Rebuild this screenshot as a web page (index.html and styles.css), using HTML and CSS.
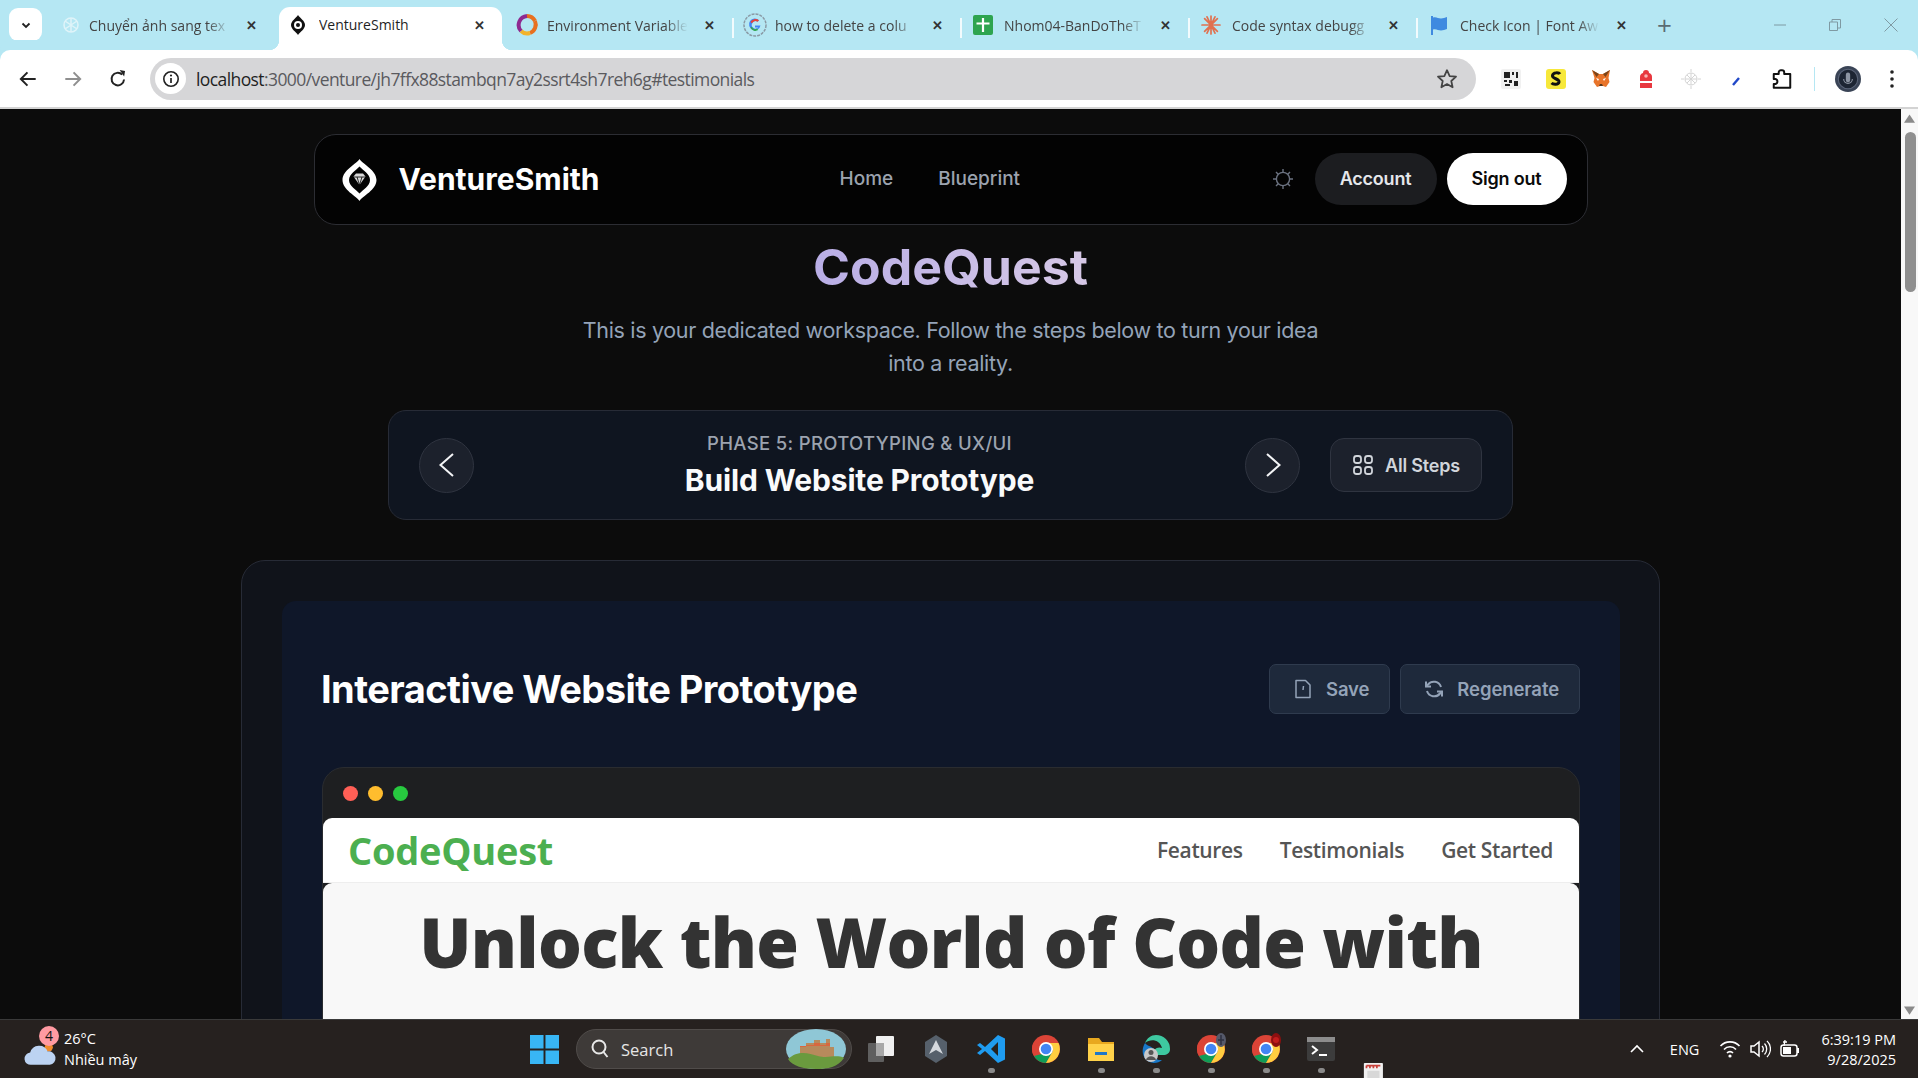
FILE: index.html
```html
<!DOCTYPE html>
<html lang="en">
<head>
<meta charset="utf-8">
<title>VentureSmith</title>
<link rel="stylesheet" href="styles.css">
</head>
<body>
<div class="window">
  <header class="tabstrip">
    <button class="tab-search"><svg width="12" height="12" viewBox="0 0 12 12"><path d="M2.5 4.5 6 8l3.5-3.5" fill="none" stroke="#222" stroke-width="1.8"/></svg></button>
    <div class="tab tab-first">
      <svg class="fav" viewBox="0 0 20 20"><g fill="none" stroke="#dff4f9" stroke-width="1.5"><circle cx="10" cy="10" r="7"/><path d="M10 3v14M4 6l12 8M16 6 4 14"/></g></svg>
      <span class="tab-title">Chuyển ảnh sang tex</span><span class="tab-x">✕</span>
    </div>
    <div class="tab tab-active">
      <svg class="fav" viewBox="0 0 20 20"><path d="M10 0C12 3 17 6 17 10S12 17 10 20C8 17 3 14 3 10S8 3 10 0Z" fill="#111"/><circle cx="10" cy="10" r="4" fill="#fff"/><circle cx="10" cy="10" r="2" fill="#111"/></svg>
      <span class="tab-title">VentureSmith</span><span class="tab-x">✕</span>
    </div>
    <div class="tab tab-after-active">
      <svg class="fav fav-lg" viewBox="0 0 24 24"><g fill="none" stroke-width="4"><path d="M12 3a9 9 0 0 1 8 5" stroke="#e8701f"/><path d="M20 8a9 9 0 0 1-5 12" stroke="#e8701f"/><path d="M15 20a9 9 0 0 1-9-2" stroke="#f2b32a"/><path d="M6 18A9 9 0 0 1 12 3" stroke="#8e2a90"/></g></svg>
      <span class="tab-title">Environment Variable</span><span class="tab-x">✕</span>
    </div>
    <div class="tab tab-sep">
      <svg class="fav fav-lg" viewBox="0 0 24 24"><circle cx="12" cy="12" r="11" fill="none" stroke="#8a9aa5" stroke-width="1.5" stroke-dasharray="3 1"/><path d="M17.500 12.400H12v2h3.300A3.700 3.700 0 1 1 14.500 8.800l1.500-1.500A5.800 5.800 0 1 0 17.500 12.400Z" fill="#4285f4"/><path d="M7.400 9a5.800 5.800 0 0 1 8.600-1.700l-1.500 1.500A3.700 3.700 0 0 0 9 10.200Z" fill="#ea4335"/><path d="M8.800 13.800a3.700 3.700 0 0 0 5 1.800l1.500 1.500a5.800 5.800 0 0 1-8-2.300Z" fill="#34a853"/></svg>
      <span class="tab-title">how to delete a colu</span><span class="tab-x">✕</span>
    </div>
    <div class="tab tab-sep">
      <svg class="fav" viewBox="0 0 20 20"><rect width="20" height="20" rx="2" fill="#2ea44f"/><path d="M10 3v14M3.500 8.500h13" stroke="#fff" stroke-width="2.200"/></svg>
      <span class="tab-title">Nhom04-BanDoTheT</span><span class="tab-x">✕</span>
    </div>
    <div class="tab tab-sep">
      <svg class="fav" viewBox="0 0 20 20"><g stroke="#e0714f" stroke-width="1.700" stroke-linecap="round"><path d="M10 1v18M1 10h18M3.600 3.600l12.800 12.800M16.400 3.600 3.600 16.400M6 1.800l8 16.400M14 1.800 6 18.200"/></g></svg>
      <span class="tab-title">Code syntax debugg</span><span class="tab-x">✕</span>
    </div>
    <div class="tab tab-sep tab-last">
      <svg class="fav" viewBox="0 0 20 20"><path d="M2 1h2v1.500c3.500-1 5 1 8 1 2 0 4-1 6-1.500v12c-2 .5-4 1.500-6 1.500-3 0-4.500-2-8-1V20H2Z" fill="#3f8ae0"/></svg>
      <span class="tab-title">Check Icon | Font Aw</span><span class="tab-x">✕</span>
    </div>
    <span class="tab-new">+</span>
    <div class="win-controls">
      <svg width="12" height="12" viewBox="0 0 12 12"><path d="M0 6h12" stroke="#7f9aa3"/></svg>
      <svg width="12" height="12" viewBox="0 0 12 12"><path d="M.5 3h8v8.500h-8ZM3 3V.5h8.500V9H8.500" fill="none" stroke="#7f9aa3"/></svg>
      <svg width="14" height="14" viewBox="0 0 14 14"><path d="M.5.500l13 13M13.500.500l-13 13" stroke="#7f9aa3"/></svg>
    </div>
  </header>

  <div class="toolbar">
    <svg class="tool" viewBox="0 0 20 20"><path d="M17 10H4M9.500 4 3.500 10l6 6" fill="none" stroke="#222" stroke-width="1.800"/></svg>
    <svg class="tool" viewBox="0 0 20 20"><path d="M3 10h13M10.500 4l6 6-6 6" fill="none" stroke="#8f8f8f" stroke-width="1.800"/></svg>
    <svg class="tool" viewBox="0 0 20 20"><path d="M15.500 10.500A5.700 5.700 0 1 1 13.800 6" fill="none" stroke="#222" stroke-width="1.800"/><path d="M11 2.500h5v5Z" fill="#222" transform="rotate(10 15 5)"/></svg>
    <div class="omnibox">
      <span class="site-info"><svg width="18" height="18" viewBox="0 0 18 18"><circle cx="9" cy="9" r="7.200" fill="none" stroke="#222" stroke-width="1.600"/><path d="M9 8v5" stroke="#222" stroke-width="1.700"/><circle cx="9" cy="5.500" r="1.100" fill="#222"/></svg></span>
      <span class="url"><span class="url-host">localhost</span>:3000/venture/jh7ffx88stambqn7ay2ssrt4sh7reh6g#testimonials</span>
      <svg class="star" viewBox="0 0 20 20"><path d="m10 2 2.400 5.300 5.800.6-4.300 3.900 1.200 5.700-5.100-2.900-5.100 2.900 1.200-5.700L1.800 7.900l5.800-.6Z" fill="none" stroke="#444" stroke-width="1.600" stroke-linejoin="round"/></svg>
    </div>
    <div class="extensions">
      <svg class="ext" viewBox="0 0 20 20"><rect width="20" height="20" rx="2" fill="#f1f1f1"/><path d="M3 3h6v6H3ZM11 3h2v3h-2ZM15 3h2v6h-2ZM3 11h3v2H3ZM8 11h3v3H8ZM13 12h4v5h-4ZM4 15h5v2H4Z" fill="#222"/></svg>
      <svg class="ext" viewBox="0 0 20 20"><rect width="20" height="20" rx="3" fill="#f7e83a"/><path d="M14 5c-1-1.500-7-2-7.500 1.500S13.500 9.500 13 13c-.5 3-6 2.500-7.500 1" fill="none" stroke="#111" stroke-width="3"/></svg>
      <svg class="ext" viewBox="0 0 20 20"><path d="M1 1l7 4h4l7-4-1.500 8 1 4-3.500 5-3-1h-3l-3 1-3.500-5 1-4Z" fill="#e8742a"/><path d="M8 17h4l-1-2H9Z" fill="#5a3a20"/><path d="M1 1l7 4-2.500 3ZM19 1l-7 4 2.500 3Z" fill="#7c4418"/><path d="M5 9l3 1-1 2ZM15 9l-3 1 1 2Z" fill="#fff"/></svg>
      <svg class="ext" viewBox="0 0 20 20"><path d="M7 4c0-2 1-3 3-3s3 1 3 3c2 .5 3 2 3 4v4H4V8c0-2 1-3.500 3-4Z" fill="#e8383f"/><circle cx="10" cy="7" r="1.800" fill="#f7b5b5"/><path d="M4 14h12v5H4Z" fill="#e8383f"/></svg>
      <svg class="ext" viewBox="0 0 20 20"><g fill="none" stroke="#d4d4d4" stroke-width="1"><circle cx="10" cy="10" r="6"/><path d="M10 4v12M4 10h12M6 6l8 8M14 6l-8 8M10 0v3M10 17v3M0 10h3M17 10h3"/></g></svg>
      <svg class="ext" viewBox="0 0 20 20"><path d="M7 16l6-7" stroke="#2048c8" stroke-width="2.400"/></svg>
      <svg class="ext ext-puzzle" viewBox="0 0 20 20"><path d="M2.500 5.500H7V4a2 2 0 0 1 2-2h1a2 2 0 0 1 2 2v1.500h5.500V18H2.500v-3.500H4a2.300 2.300 0 0 0 0-4.500H2.500Z" fill="none" stroke="#111" stroke-width="1.800" stroke-linejoin="round"/></svg>
      <span class="tool-sep"></span>
      <svg class="avatar" viewBox="0 0 24 24"><circle cx="12" cy="12" r="12" fill="#3a4456"/><circle cx="12" cy="12" r="9" fill="#1d2533" stroke="#5b6478"/><rect x="10" y="6" width="4" height="9" rx="2" fill="#8d95a3"/><path d="M8 12a4 4 0 0 0 8 0" fill="none" stroke="#8d95a3"/></svg>
      <svg class="kebab" viewBox="0 0 4 20"><circle cx="2" cy="3" r="1.800" fill="#222"/><circle cx="2" cy="10" r="1.800" fill="#222"/><circle cx="2" cy="17" r="1.800" fill="#222"/></svg>
    </div>
  </div>

  <div class="viewport">
    <main class="page">
      <nav class="nav">
        <a class="brand">
          <svg class="brand-mark" viewBox="0 0 34 42"><path d="M17 0C20 5 34 11 34 21S20 37 17 42C14 37 0 31 0 21S14 5 17 0Z" fill="#fff"/><path d="M17 7.500C20 11 27.500 15 27.500 21S20 31 17 34.500C14 31 6.500 27 6.500 21S14 11 17 7.500Z" fill="#030303"/><path d="M11 17.500 13.500 14.500h7L23 17.500 17 26Z" fill="#d8d8d8"/><path d="M11 18h12M14.500 18 17 26 19.500 18" stroke="#030303" stroke-width=".8" fill="none"/></svg>
          <span class="brand-name">VentureSmith</span>
        </a>
        <div class="nav-links"><a>Home</a><a>Blueprint</a></div>
        <div class="nav-actions">
          <svg class="sun" viewBox="0 0 20 20"><g fill="none" stroke="#6b7280" stroke-width="1.400"><circle cx="10" cy="10" r="6.600"/><path d="M10 0v3M10 17v3M0 10h3M17 10h3M3 3l2.200 2.200M14.800 14.800 17 17M17 3l-2.200 2.200M5.200 14.800 3 17"/></g></svg>
          <a class="pill pill-dark">Account</a>
          <a class="pill pill-light">Sign out</a>
        </div>
      </nav>

      <h1 class="venture-title">CodeQuest</h1>
      <p class="venture-sub">This is your dedicated workspace. Follow the steps below to turn your idea into a reality.</p>

      <section class="stepper">
        <button class="round-btn"><svg width="30" height="30" viewBox="0 0 30 30"><path d="M21 4 8.500 15 21 26" fill="none" stroke="#f3f4f6" stroke-width="2"/></svg></button>
        <div class="step-text">
          <div class="step-phase">PHASE 5: PROTOTYPING &amp; UX/UI</div>
          <div class="step-name">Build Website Prototype</div>
        </div>
        <button class="round-btn"><svg width="30" height="30" viewBox="0 0 30 30"><path d="M9 4 21.500 15 9 26" fill="none" stroke="#f3f4f6" stroke-width="2"/></svg></button>
        <button class="all-steps"><svg width="22" height="22" viewBox="0 0 22 22"><g fill="none" stroke="#d1d5db" stroke-width="1.800"><rect x="2" y="2" width="7" height="7" rx="2.500"/><rect x="13" y="2" width="7" height="7" rx="2.500"/><rect x="2" y="13" width="7" height="7" rx="2.500"/><rect x="13" y="13" width="7" height="7" rx="2.500"/></g></svg>All Steps</button>
      </section>

      <section class="panel">
        <div class="panel-inner">
          <div class="panel-head">
            <h2 class="panel-title">Interactive Website Prototype</h2>
            <div class="panel-actions">
              <button class="ghost-btn"><svg width="22" height="22" viewBox="0 0 22 22"><path d="M4 2.500h9.500L18 7v12.500H4ZM11.500 8 11 12" fill="none" stroke="#94a3b8" stroke-width="1.500" stroke-linejoin="round"/></svg>Save</button>
              <button class="ghost-btn"><svg width="22" height="22" viewBox="0 0 22 22"><g fill="none" stroke="#94a3b8" stroke-width="2"><path d="M18 9a7.500 7.500 0 0 0-13-2.500L3 8.500"/><path d="M3 3.500v5h5"/><path d="M4 13a7.500 7.500 0 0 0 13 2.500l2-2"/><path d="M19 18.500v-5h-5"/></g></svg>Regenerate</button>
            </div>
          </div>
          <div class="mock">
            <div class="mock-bar"><span class="dot dot-red"></span><span class="dot dot-yellow"></span><span class="dot dot-green"></span></div>
            <div class="mock-nav">
              <span class="mock-logo">CodeQuest</span>
              <div class="mock-links"><a>Features</a><a>Testimonials</a><a>Get Started</a></div>
            </div>
            <div class="mock-hero"><h1 class="mock-heading">Unlock the World of Code with</h1></div>
          </div>
        </div>
      </section>
    </main>
    <aside class="scrollbar">
      <svg class="scroll-arrow" viewBox="0 0 12 9"><path d="M6 0 12 9H0Z" fill="#8a8a8a"/></svg>
      <div class="scroll-track"><div class="scroll-thumb"></div></div>
      <svg class="scroll-arrow" viewBox="0 0 12 9"><path d="M6 9 0 0h12Z" fill="#8a8a8a"/></svg>
    </aside>
  </div>

  <footer class="taskbar">
    <div class="weather">
      <svg class="weather-icon" viewBox="0 0 32 26"><circle cx="24" cy="7" r="4" fill="#f08a2c"/><path d="M7 24a6 6 0 0 1-1-12 9 9 0 0 1 17-1 6.500 6.500 0 0 1 2 13Z" fill="#bcd3f2"/></svg>
      <span class="weather-badge">4</span>
      <div class="weather-text"><span>26°C</span><span>Nhiều mây</span></div>
    </div>
    <div class="task-center">
      <svg class="start" viewBox="0 0 30 30"><path d="M0 0h14v14H0ZM16 0h14v14H16ZM0 16h14v14H0ZM16 16h14v14H16Z" fill="#38b6f5"/></svg>
      <div class="search">
        <svg width="20" height="22" viewBox="0 0 20 22"><circle cx="9" cy="9" r="6.500" fill="none" stroke="#e8e8e8" stroke-width="2"/><path d="m13.500 14 4 5" stroke="#e8e8e8" stroke-width="2"/></svg>
        <span>Search</span>
        <svg class="search-art" viewBox="0 0 60 40"><ellipse cx="30" cy="20" rx="30" ry="20" fill="#8fc7d6"/><path d="M14 18h6v-4h8v-3h6v3h6v-4h4v8h4v10H14Z" fill="#b78a5c"/><path d="M14 18h6v-2h8v-2h6v2h6v-2h4v3H14Z" fill="#d9673f"/><path d="M2 30c10-9 20-6 30-3s18-2 26 2c-6 9-16 11-28 11S6 37 2 30Z" fill="#6a9a3e"/></svg>
      </div>
      <svg class="app" viewBox="0 0 30 30"><rect x="2" y="9" width="16" height="19" rx="1" fill="#5f5f5f"/><rect x="10" y="2" width="18" height="20" rx="1" fill="#f0f0f0"/><rect x="10" y="9" width="8" height="13" fill="#a8a8a8"/></svg>
      <svg class="app" viewBox="0 0 30 30"><path d="M15 1 26 8v14l-11 7L4 22V8Z" fill="#56606b"/><path d="M15 6 8 20l7-4 7 4Z" fill="#d4d8dd"/></svg>
      <span class="app-wrap app-on"><svg class="app" viewBox="0 0 30 30"><path d="M22 1l7 3.500v21L22 29 9 17l-5 4-3-2 5-4-5-4 3-2 5 4Z" fill="#1f9cf0"/><path d="M22 8v14l-7-7Z" fill="#262220"/></svg></span>
      <span class="app-wrap"><svg class="app" viewBox="0 0 30 30"><use href="#chrome"/></svg></span>
      <span class="app-wrap app-on"><svg class="app" viewBox="0 0 30 30"><path d="M2 4h11l3 4h12v4H2Z" fill="#e8a81f"/><path d="M2 10h26v17H2Z" fill="#ffd24a"/><rect x="9" y="18" width="12" height="3" fill="#1f78c8"/></svg></span>
      <span class="app-wrap app-on"><svg class="app" viewBox="0 0 30 30"><path d="M15 1a14 14 0 0 1 14 14c0 4-3 6-7 6H13c-2-6 4-9 8-7C19 6 10 4 4 9 6 4 10 1 15 1Z" fill="#3ec8a0"/><path d="M4 9c-5 8-2 19 9 20 3 0 6-1 8-3-7 1-11-5-8-11C10 12 6 12 4 9Z" fill="#1878c8"/><circle cx="10" cy="21" r="7" fill="#c8c8c8"/><circle cx="10" cy="18.500" r="2.500" fill="#555"/><path d="M5 26c1-5 9-5 10 0Z" fill="#555"/></svg></span>
      <span class="app-wrap app-on"><svg class="app app-over" viewBox="0 0 30 30"><use href="#chrome"/><ellipse cx="25" cy="6" rx="5" ry="7" fill="#55596a"/><path d="M25 1v10M22 6h6" stroke="#2e3140" stroke-width="1.500"/></svg></span>
      <span class="app-wrap app-on"><svg class="app app-over" viewBox="0 0 30 30"><use href="#chrome"/><ellipse cx="25" cy="6" rx="5" ry="7" fill="#8c1010"/><circle cx="25" cy="6" r="3" fill="#c21c1c"/></svg></span>
      <span class="app-wrap app-on"><svg class="app" viewBox="0 0 30 30"><rect x="1" y="3" width="28" height="24" rx="2" fill="#3c3c3c"/><rect x="1" y="3" width="28" height="5" fill="#8d8d8d"/><path d="m6 12 5 4-5 4" fill="none" stroke="#fff" stroke-width="2"/><path d="M13 21h8" stroke="#fff" stroke-width="2"/></svg></span>
      <svg class="floating-app" viewBox="0 0 30 30"><rect x="1" y="0" width="22" height="30" rx="1" fill="#f0f0f0"/><path d="M4 3h16M4 3v3M8 3v3M12 3v3M16 3v3" stroke="#c9403a" stroke-width="2"/><rect x="5" y="9" width="14" height="16" fill="#d8d8d8"/><path d="M24 28l4-6" stroke="#2d8ad8" stroke-width="2"/></svg>
    </div>
    <div class="tray">
      <svg width="16" height="10" viewBox="0 0 16 10"><path d="m2 8 6-6 6 6" fill="none" stroke="#fff" stroke-width="1.600"/></svg>
      <span class="tray-lang">ENG</span>
      <div class="tray-icons">
        <svg width="22" height="20" viewBox="0 0 22 20"><g fill="none" stroke="#fff" stroke-width="1.600"><path d="M1.500 7a13 13 0 0 1 19 0M5 10.500a8 8 0 0 1 12 0M8 14a4 4 0 0 1 6 0"/></g><circle cx="11" cy="17" r="1.600" fill="#fff"/></svg>
        <svg width="22" height="20" viewBox="0 0 22 20"><path d="M2 7h3l5-4v14l-5-4H2Z" fill="none" stroke="#fff" stroke-width="1.500"/><path d="M13 7a4 4 0 0 1 0 6M15.500 4.500a8 8 0 0 1 0 11M18 2a11 11 0 0 1 0 16" fill="none" stroke="#fff" stroke-width="1.300"/></svg>
        <svg width="22" height="20" viewBox="0 0 22 20"><rect x="2" y="6" width="16" height="11" rx="2.500" fill="none" stroke="#fff" stroke-width="1.500"/><rect x="18" y="9" width="2" height="5" fill="#fff"/><path d="M4 8h8v7H4Z" fill="#fff"/><path d="M6 1 5 7M8 3H4" stroke="#fff" stroke-width="1.300"/></svg>
      </div>
      <div class="clock"><span>6:39:19 PM</span><span>9/28/2025</span></div>
    </div>
  </footer>
</div>
<svg class="defs" width="0" height="0"><defs><g id="chrome"><circle cx="15" cy="15" r="14" fill="#db4437"/><path d="M15 15 3 22A14 14 0 0 1 3 8Z" fill="#db4437"/><path d="M3 22a14 14 0 0 0 12 7l7-12Z" fill="#0f9d58"/><path d="M15 9h12.500A14 14 0 0 1 15 29l7-12Z" fill="#ffcd40"/><circle cx="15" cy="15" r="7" fill="#fff"/><circle cx="15" cy="15" r="5.300" fill="#4285f4"/></g></defs></svg>
</body>
</html>
```

FILE: styles.css
```css
* { box-sizing: border-box; }
html, body { margin: 0; height: 100%; overflow: hidden; }
body { font-family: "Inter", "Liberation Sans", sans-serif; background: #0c0c0c; }
a { color: inherit; text-decoration: none; }
button { font-family: inherit; border: 0; padding: 0; background: none; }
h1, h2, p { margin: 0; }
.defs { position: absolute; }

.window { display: flex; flex-direction: column; height: 1078px; }

/* browser chrome */
.tabstrip { flex: none; height: 50px; background: #b5e7f3; display: flex; align-items: flex-end; padding-left: 9px; font: 14px "Open Sans", sans-serif; color: #444; position: relative; }
.tab-search { width: 33px; height: 33px; margin: 0 9px 9px 0; background: #fff; border-radius: 9px; display: flex; align-items: center; justify-content: center; }
.tab { flex: none; width: 228px; height: 42px; padding: 0 16px 8px 13px; display: flex; align-items: center; position: relative; }
.tab-first { padding: 0 21px 8px 10px; }
.tab-first .fav { margin-right: 8px; }
.tab-active { width: 223px; height: 43px; padding: 0 16px 8px 9px; background: #fff; border-radius: 11px 11px 0 0; color: #1f1f1f; z-index: 1; }
.tab-after-active { margin-left: 2px; }
.tab-active::before, .tab-active::after { content: ""; position: absolute; bottom: 0; width: 10px; height: 10px; }
.tab-active::before { left: -10px; background: radial-gradient(circle at 0 0, transparent 10px, #fff 10.500px); }
.tab-active::after { right: -10px; background: radial-gradient(circle at 100% 0, transparent 10px, #fff 10.500px); }
.tab-sep::before { content: ""; position: absolute; left: 0; top: 10px; height: 20px; width: 2px; background: #f2fbfd; }
.fav { width: 20px; height: 20px; flex: none; margin-right: 11px; }
.fav-lg { width: 24px; height: 24px; margin-right: 8px; margin-left: -2px; }
.tab-title { flex: 1; min-width: 0; white-space: nowrap; overflow: hidden; -webkit-mask-image: linear-gradient(90deg, #000 82%, transparent 97%); mask-image: linear-gradient(90deg, #000 82%, transparent 97%); }
.tab-active .tab-title { -webkit-mask-image: none; mask-image: none; }
.tab-x { flex: none; margin-left: 10px; width: 14px; font-size: 13px; font-weight: 700; color: #333; text-align: center; }
.tab-new { font-size: 26px; font-weight: 400; color: #5b6c73; margin: 0 0 13px 13px; line-height: 24px; }
.win-controls { position: absolute; right: 20px; top: 18px; display: flex; gap: 43px; align-items: center; }

.toolbar { flex: none; height: 59px; background: #fff; display: flex; align-items: center; padding: 0 0 0 17px; border-bottom: 2px solid #d3d3d3; border-top-left-radius: 10px; border-top-right-radius: 10px; box-shadow: 0 -10px 0 #b5e7f3; position: relative; }
.tool { width: 22px; height: 22px; margin-right: 23px; flex: none; }
.tool:nth-child(3) { margin-right: 21px; }
.omnibox { flex: none; width: 1326px; height: 42px; border-radius: 21px; background: #d6d6d8; display: flex; align-items: center; padding: 0 18px 0 5px; }
.site-info { width: 31px; height: 31px; border-radius: 50%; background: #fff; display: flex; align-items: center; justify-content: center; flex: none; }
.url { flex: 1; margin-left: 10px; font: 17.500px "Open Sans", sans-serif; letter-spacing: -.59px; color: #5a5a5e; }
.url-host { color: #1f1f1f; }
.star { width: 22px; height: 22px; }
.extensions { display: flex; align-items: center; flex: 1; padding-left: 25px; }
.ext { width: 20px; height: 20px; margin-right: 25px; flex: none; }
.ext-puzzle { width: 22px; height: 22px; margin-right: 21px; }
.tool-sep { width: 1px; height: 24px; background: #b5e7f3; margin-right: 20px; }
.avatar { width: 26px; height: 26px; margin-right: 29px; }
.kebab { width: 4px; height: 20px; }

/* page viewport */
.viewport { flex: 1; min-height: 0; display: flex; overflow: hidden; background: #0c0c0c; }
.page { flex: 1; min-width: 0; padding-top: 25px; display: flex; flex-direction: column; align-items: center; overflow: hidden; }
.scrollbar { flex: none; width: 17px; background: #f8f8f8; display: flex; flex-direction: column; }
.scroll-arrow { flex: none; width: 17px; height: 18px; padding: 5px 3px 4px; }
.scroll-track { flex: 1; }
.scroll-thumb { width: 11px; margin: 5px auto 0 4px; height: 160px; border-radius: 6px; background: #8f8f8f; }

/* site nav */
.nav { flex: none; width: 1274px; height: 91px; background: #030303; border: 1px solid #2c2d33; border-radius: 22px; display: flex; align-items: center; position: relative; padding: 0 20px 2px 27px; }
.brand { display: flex; align-items: center; gap: 22px; margin-top: 2px; }
.brand-mark { width: 35px; height: 42px; flex: none; }
.brand-name { font-size: 30px; font-weight: 700; color: #fff; margin-top: -2px; }
.nav-links { display: flex; gap: 45px; margin-left: 240px; font-size: 19px; font-weight: 500; color: #9ca3af; }
.nav-actions { margin-left: auto; display: flex; align-items: center; gap: 10px; }
.sun { width: 20px; height: 20px; margin-right: 12px; }
.pill { height: 52px; border-radius: 26px; display: flex; align-items: center; justify-content: center; font-size: 18px; font-weight: 600; letter-spacing: -.2px; }
.pill-dark { width: 122px; background: #1c1d20; color: #e5e7eb; }
.pill-light { width: 120px; background: #fff; color: #0a0a0a; }

.venture-title { margin-top: 12px; font-size: 50px; line-height: 60px; font-weight: 700; background: linear-gradient(90deg, #b9aee6, #d6c8e6); -webkit-background-clip: text; background-clip: text; color: transparent; }
.venture-sub { margin-top: 17px; width: 768px; font-size: 21.500px; line-height: 33px; text-align: center; color: #94a3b8; letter-spacing: -.33px; }

/* stepper */
.stepper { flex: none; margin-top: 30px; width: 1125px; height: 110px; background: #0f1520; border: 1px solid #272b36; border-radius: 18px; display: flex; align-items: center; padding: 0 30px; }
.round-btn { flex: none; width: 55px; height: 55px; border-radius: 50%; background: #1c212c; border: 1px solid #2f3440; display: flex; align-items: center; justify-content: center; }
.step-text { flex: 1; text-align: center; }
.step-phase { font-size: 18.500px; line-height: 26px; font-weight: 500; letter-spacing: .34px; color: #9ca3af; margin-top: -3px; }
.step-name { margin-top: 6px; font-size: 30px; line-height: 36px; font-weight: 700; letter-spacing: -.15px; color: #f9fafb; }
.all-steps { flex: none; margin-left: 30px; width: 152px; height: 54px; border-radius: 14px; background: #1c212c; border: 1px solid #2f3440; color: #d1d5db; font-size: 18px; font-weight: 600; letter-spacing: -.2px; display: flex; align-items: center; justify-content: center; gap: 11px; }

/* panel */
.panel { flex: none; margin-top: 40px; width: 1419px; background: #10131a; border: 1px solid #272b36; border-radius: 24px; padding: 40px 39px 40px 40px; }
.panel-inner { background: #0f1729; border-radius: 14px; padding: 0 40px; height: 600px; }
.panel-head { display: flex; align-items: center; justify-content: space-between; padding-top: 63px; }
.panel-title { font-size: 38px; line-height: 50px; font-weight: 700; letter-spacing: -.55px; color: #fff; margin-left: -1px; }
.panel-actions { display: flex; gap: 10px; }
.ghost-btn { height: 50px; padding: 0 20px 0 22px; background: #1e293b; border: 1px solid #2f3b4e; border-radius: 7px; color: #94a3b8; font-size: 18.500px; font-weight: 600; letter-spacing: -.1px; display: flex; align-items: center; gap: 12px; }
.mock { margin-top: 53px; background: #1e1f21; border: 1px solid #2a2c30; border-radius: 22px 22px 0 0; height: 400px; }
.mock-bar { height: 50px; padding-left: 20px; display: flex; align-items: center; gap: 10px; }
.dot { width: 15px; height: 15px; border-radius: 50%; }
.dot-red { background: #ff5f56; }
.dot-yellow { background: #ffbd2e; }
.dot-green { background: #27c93f; }
.mock-nav { height: 65px; background: #fff; border-radius: 9px 9px 0 0; border-bottom: 1px solid #eee; padding: 0 26px 0 25px; display: flex; align-items: center; justify-content: space-between; font-family: "Open Sans", sans-serif; }
.mock-logo { font-size: 38px; font-weight: 700; letter-spacing: -.25px; color: #4caf50; }
.mock-links { display: flex; gap: 37px; font-size: 21px; font-weight: 600; letter-spacing: -.35px; color: #555; }
.mock-hero { background: #f8f8f8; border-radius: 9px 9px 0 0; height: 290px; padding-top: 14px; font-family: "Open Sans", sans-serif; }
.mock-heading { text-align: center; font-size: 69px; line-height: 88px; font-weight: 800; letter-spacing: -.7px; color: #333; white-space: nowrap; }

/* taskbar */
.taskbar { flex: none; height: 59px; background: #26211f; border-top: 1px solid #3a3a3a; display: flex; align-items: center; position: relative; color: #fff; font: 14.500px/21px "Open Sans", sans-serif; }
.weather { position: absolute; left: 24px; top: 0; height: 58px; display: flex; align-items: center; }
.weather-icon { width: 33px; height: 27px; margin: 8px 7px 0 0; }
.weather-badge { position: absolute; left: 15px; top: 6px; width: 20px; height: 20px; border-radius: 50%; background: #ff9aa2; color: #111; text-align: center; font-size: 14px; line-height: 20px; }
.weather-text { display: flex; flex-direction: column; }
.task-center { position: absolute; left: 530px; top: 0; height: 58px; display: flex; align-items: center; }
.start { width: 29px; height: 29px; flex: none; }
.search { width: 276px; height: 40px; margin-left: 17px; border-radius: 20px; background: #3e3a38; border: 1px solid #504c4a; display: flex; align-items: center; padding: 0 5px 0 13px; gap: 11px; font-size: 16.500px; color: #e6e6e6; }
.search span { flex: 1; }
.search-art { width: 60px; height: 40px; }
.app { width: 30px; height: 30px; flex: none; display: block; }
.app-over { overflow: visible; }
.search + .app { margin-left: 14px; }
.search + .app + .app { margin-left: 25px; }
.app-wrap { display: block; margin-left: 25px; position: relative; flex: none; }
.app-wrap.app-on::after { content: ""; position: absolute; left: 12px; bottom: -9px; width: 7px; height: 5px; border-radius: 3px; background: #8a8a8a; }
.floating-app { position: absolute; left: 833px; top: 41px; width: 26px; height: 30px; }
.tray { position: absolute; right: 22px; top: 0; height: 58px; display: flex; align-items: center; }
.tray-lang { margin-left: 25px; font-size: 14.500px; }
.tray-icons { margin-left: 20px; display: flex; gap: 8px; }
.clock { margin-left: 20px; padding-top: 2px; display: flex; flex-direction: column; align-items: flex-end; line-height: 20px; }
```
